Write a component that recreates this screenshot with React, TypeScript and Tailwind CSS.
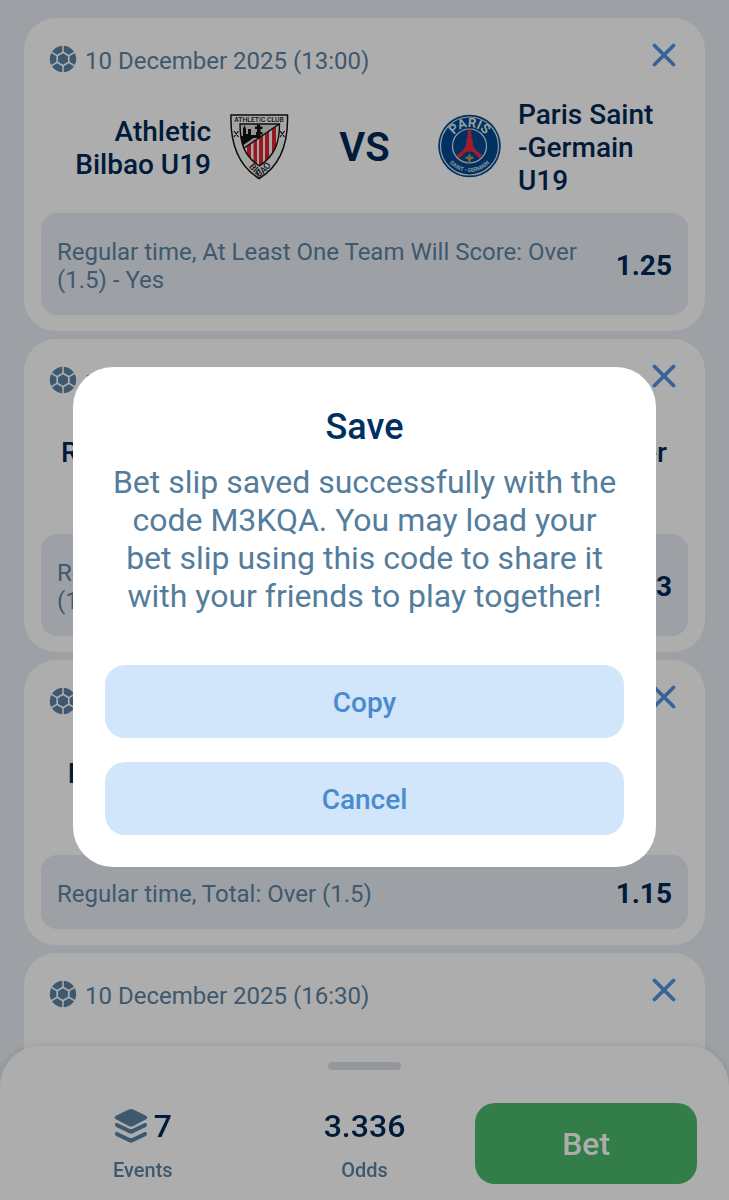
import { useState } from 'react'

type Team = 'athletic' | 'psg' | 'plain'

interface Pick {
  date: string
  home: string
  away: string
  homeLogo: Team
  awayLogo: Team
  market: string
  odd: string
}

const picks: Pick[] = [
  {
    date: '10 December 2025 (13:00)',
    home: 'Athletic\nBilbao U19',
    away: 'Paris Saint\n-Germain\nU19',
    homeLogo: 'athletic',
    awayLogo: 'psg',
    market: 'Regular time, At Least One Team Will Score: Over (1.5) - Yes',
    odd: '1.25',
  },
  {
    date: '10 December 2025 (15:00)',
    home: 'Real Madrid\nU19',
    away: 'Manchester\nCity U19',
    homeLogo: 'plain',
    awayLogo: 'plain',
    market: 'Regular time, At Least One Team Will Score: Over (1.5) - Yes',
    odd: '1.13',
  },
  {
    date: '10 December 2025 (16:00)',
    home: 'Bodo/Glimt\nU19',
    away: 'Dortmund\nU19',
    homeLogo: 'plain',
    awayLogo: 'plain',
    market: 'Regular time, Total: Over (1.5)',
    odd: '1.15',
  },
  {
    date: '10 December 2025 (16:30)',
    home: 'Benfica\nU19',
    away: 'Napoli\nU19',
    homeLogo: 'plain',
    awayLogo: 'plain',
    market: 'Regular time, Total: Over (1.5)',
    odd: '1.20',
  },
]

const BallIcon = () => (
  <svg viewBox="0 0 28 28" className="size-7 shrink-0 text-[#5c84a4]" aria-hidden="true">
    <circle cx="14" cy="14" r="13.2" fill="currentColor" />
    <g stroke="#fff" strokeWidth="1.5">
      <path d="M14 0v8M14 20v8M1.9 7l6.6 3.800M26.1 7l-6.6 3.800M1.9 21l6.600-3.800M26.1 21l-6.600-3.800" />
      <path d="M14 7.300l5.800 3.350v6.700l-5.800 3.350-5.800-3.350v-6.700z" fill="currentColor" strokeWidth="1.700" />
    </g>
  </svg>
)

const CloseIcon = () => (
  <svg viewBox="0 0 24 24" className="size-6" fill="none" stroke="currentColor" strokeWidth="3.8" strokeLinecap="round" aria-hidden="true">
    <path d="M2.5 2.5l19 19M21.5 2.5l-19 19" />
  </svg>
)

const StackIcon = () => (
  <svg viewBox="0 0 34 36" className="h-9 w-[34px] text-[#5c84a4]" fill="currentColor" aria-hidden="true">
    <path d="M14.700 1.600a5 5 0 0 1 4.600 0l12.800 6.200c1.600.8 1.600 2.600 0 3.400l-12.800 6.700a5 5 0 0 1-4.600 0L1.900 11.200c-1.600-.8-1.600-2.600 0-3.400z" />
    <path d="M1 16.500c0-1.200 1.200-1.900 2.300-1.400l12 5.700c1.100.5 2.300.5 3.400 0l12-5.700c1.100-.5 2.300.2 2.300 1.400 0 1.400-.6 2.100-1.700 2.700l-12 5.900a5 5 0 0 1-4.600 0l-12-5.900C1.600 18.600 1 17.900 1 16.500z" />
    <path d="M1 25.500c0-1.200 1.200-1.900 2.300-1.400l12 5.700c1.100.5 2.300.5 3.400 0l12-5.700c1.100-.5 2.300.2 2.300 1.400 0 1.400-.6 2.100-1.700 2.700l-12 5.900a5 5 0 0 1-4.600 0l-12-5.900C1.600 27.600 1 26.900 1 25.500z" />
  </svg>
)

const AthleticLogo = () => (
  <svg viewBox="0 0 64 68" className="h-[68px] w-16" aria-label="Athletic Club">
    <defs>
      <clipPath id="athletic-inner">
        <path d="M13 12h39.500c0 18-4 31-20 42C17 44 13 31 13 12z" />
      </clipPath>
      <path id="athletic-base" d="M14 40Q21 58 32.500 64.500Q45 58 51 38" />
    </defs>
    <path d="M4 3h56.500c.8 25-6 50-28.300 63.500C10 53 3.200 28 4 3z" fill="#f4f4f4" stroke="#111" strokeWidth="1.500" />
    <g clipPath="url(#athletic-inner)">
      <path d="M12 11h42v44H12z" fill="#f4f4f4" />
      <path d="M20 20h4v36h-4zM26.500 20h3.500v36h-3.500zM32 16h4v40h-4zM38 14h4v40h-4zM45 12h4v40h-4z" fill="#e2232f" />
      <path d="M12 11h43L15 38z" fill="#dcdcdc" />
      <path d="M12 24h4v-7l1.500-4 1.500 4v5h2v-5h3v6h5v-3h1v-3h-2v-2.500h2v-2h3v2h2.500V17h-2v3h2v2.500h-2v3.500h-7l-14 9.500z" fill="#111" />
      <path d="M53 11.500L15 37.500" stroke="#111" strokeWidth="1.400" />
    </g>
    <path d="M13 12h39.500c0 18-4 31-20 42C17 44 13 31 13 12z" fill="none" stroke="#111" strokeWidth="1.400" />
    <path d="M7 19l4.500 6M11.500 19L7 25M53 19l4.500 6M57.500 19L53 25" stroke="#111" strokeWidth="1.200" />
    <text x="32" y="10" fontSize="6.800" fontWeight="500" textAnchor="middle" fill="#222">ATHLETIC CLUB</text>
    <text fontSize="9" fontWeight="500" textAnchor="middle" fill="#222">
      <textPath href="#athletic-base" startOffset="50%">BILBAO</textPath>
    </text>
  </svg>
)

const PsgLogo = () => (
  <svg viewBox="0 0 64 64" className="size-16" aria-label="Paris Saint-Germain">
    <defs>
      <path id="psg-top" d="M12.500 32a19 19 0 0 1 38 0" />
      <path id="psg-bottom" d="M5.500 32a26 26 0 0 0 52 0" />
    </defs>
    <circle cx="31.500" cy="32" r="31.300" fill="#00498f" />
    <circle cx="31.500" cy="32" r="29" fill="none" stroke="#dfe6ee" strokeWidth="1.200" />
    <circle cx="31.500" cy="32" r="17" fill="#00498f" stroke="#dfe6ee" strokeWidth="1.200" />
    <g transform="translate(-.5 0)">
      <path d="M30.500 15.500h3l.8 10h1l.3 2h-.8c1 6 4.200 10 10 13.500l-2.500 4c-3-3-5-7.500-10.300-7.500s-7.300 4.500-10.300 7.500l-2.500-4c5.800-3.500 9-7.500 10-13.500h-.8l.3-2h1z" fill="#ec2c40" />
      <path d="M32 39.500c1.300 1.500 1.500 2.800.8 4.300 1-1.800 3.500-1.500 3.200.4-.2 1-1.400 1-1.500.2l-1.500 1.800.5 2.200h-3l.5-2.200-1.500-1.800c-.1.800-1.300.8-1.500-.2-.3-1.900 2.200-2.200 3.200-.4-.7-1.500-.5-2.800.8-4.300z" fill="#b39a62" />
    </g>
    <text fontSize="13" fontWeight="600" textAnchor="middle" fill="#e6ecf2">
      <textPath href="#psg-top" startOffset="50%">PARIS</textPath>
    </text>
    <text fontSize="5.500" fontWeight="600" textAnchor="middle" fill="#dfe6ee">
      <textPath href="#psg-bottom" startOffset="50%">SAINT - GERMAIN</textPath>
    </text>
  </svg>
)

const TeamLogo = ({ team }: { team: Team }) => (
  <div className="shrink-0 pb-1">
    {team === 'athletic' && <AthleticLogo />}
    {team === 'psg' && <PsgLogo />}
    {team === 'plain' && (
      <svg viewBox="0 0 64 64" className="size-16" aria-hidden="true">
        <circle cx="32" cy="32" r="28" fill="#d5dee6" />
      </svg>
    )}
  </div>
)

const PickCard = ({ pick, onRemove }: { pick: Pick; onRemove: () => void }) => (
  <li className="rounded-[32px] bg-white px-[17px] pb-4">
    <div className="flex h-20 items-start justify-between pt-[25px] pr-3 pl-2">
      <div className="flex items-start gap-2 pt-0.5 text-2xl text-[#5c84a4]">
        <BallIcon />
        <span>{pick.date}</span>
      </div>
      <button type="button" aria-label="Remove" onClick={onRemove} className="text-[#5094e0]">
        <CloseIcon />
      </button>
    </div>
    <div className="flex min-h-[99px] items-center text-[28px] leading-[33px] font-medium text-[#002a56]">
      <p className="flex-1 pr-4 text-right whitespace-pre-line">{pick.home}</p>
      <TeamLogo team={pick.homeLogo} />
      <span className="w-[147px] text-center text-[40px] font-semibold">VS</span>
      <TeamLogo team={pick.awayLogo} />
      <p className="flex-1 pl-4 whitespace-pre-line">{pick.away}</p>
    </div>
    <div className="mt-4 flex items-center justify-between gap-4 rounded-2xl bg-[#e7eef3] px-4 pt-[25px] pb-[21px]">
      <p className="text-2xl leading-7 text-[#5c84a4]">{pick.market}</p>
      <span className="text-[28px] leading-7 font-bold text-[#002a56]">{pick.odd}</span>
    </div>
  </li>
)

const App = () => {
  const [items, setItems] = useState(picks)
  const [open, setOpen] = useState(true)

  const handleCopy = () => {
    navigator.clipboard?.writeText('M3KQA')
    setOpen(false)
  }

  return (
    <div className="relative h-screen overflow-hidden bg-[#e7eef3] font-['Roboto',sans-serif]">
      <ul className="flex flex-col gap-2 px-6 pt-[18px]">
        {items.map((pick) => (
          <PickCard
            key={pick.date}
            pick={pick}
            onRemove={() => setItems(items.filter((item) => item !== pick))}
          />
        ))}
      </ul>

      <footer className="fixed inset-x-0 bottom-0 rounded-t-[40px] bg-white px-8 pt-4 pb-4 shadow-[0_0_8px_rgba(0,0,0,0.12)]">
        <div className="mx-auto h-2 w-[73px] rounded-full bg-[#dcdfeb]" />
        <div className="mt-8 grid grid-cols-3 items-center">
          <div className="flex flex-col items-center gap-3 pt-1.5">
            <div className="flex h-9 items-center gap-1.5 text-[32px] font-medium text-[#002a56]">
              <StackIcon />
              7
            </div>
            <span className="text-xl font-medium text-[#5c84a4]">Events</span>
          </div>
          <div className="flex flex-col items-center gap-3 pt-1.5">
            <div className="flex h-9 items-center text-[32px] font-medium text-[#002a56]">3.336</div>
            <span className="text-xl font-medium text-[#5c84a4]">Odds</span>
          </div>
          <button type="button" className="h-[81px] rounded-[20px] bg-[#4ab86a] pt-0.5 text-[32px] font-medium text-white">
            Bet
          </button>
        </div>
      </footer>

      {open && (
        <div className="fixed inset-0 flex items-center justify-center bg-black/32 px-[10%] pt-[34px]">
          <div role="dialog" aria-modal="true" aria-labelledby="save-title" className="w-full rounded-[40px] bg-white px-8 pt-9 pb-8 text-center">
            <h2 id="save-title" className="text-4xl leading-[48px] font-medium text-[#002f60]">Save</h2>
            <p className="px-1 pt-3 text-[32px] leading-[38px] text-[#547d9c]">
              Bet slip saved successfully with the code M3KQA. You may load your bet slip using this code to share it with your friends to play together!
            </p>
            <div className="mt-[50px] flex flex-col gap-6 text-[28px] font-medium text-[#4a8bd0]">
              <button type="button" onClick={handleCopy} className="h-[73px] rounded-[20px] bg-[#d1e6fa] pt-0.5">Copy</button>
              <button type="button" onClick={() => setOpen(false)} className="h-[73px] rounded-[20px] bg-[#d1e6fa] pt-0.5">Cancel</button>
            </div>
          </div>
        </div>
      )}
    </div>
  )
}

export default App
